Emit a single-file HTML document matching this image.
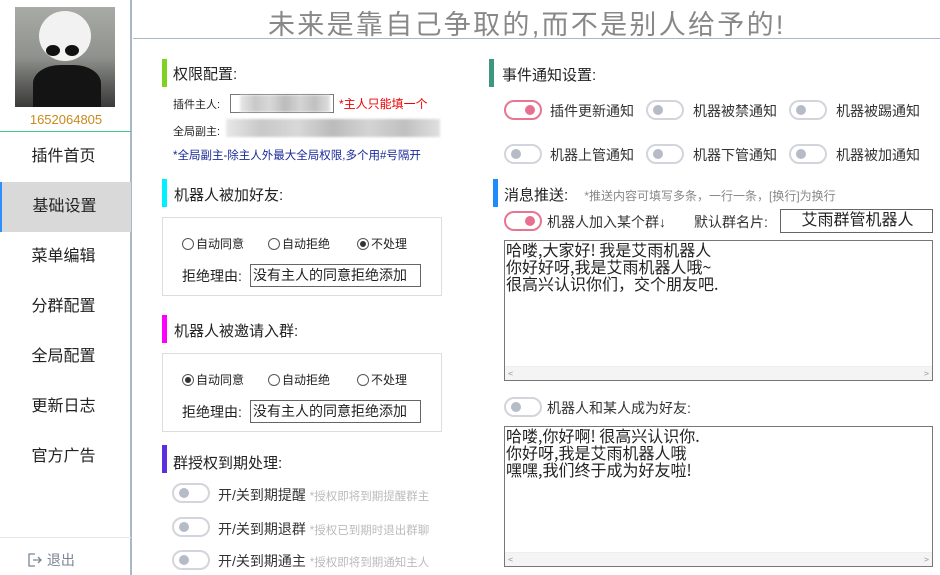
<!DOCTYPE html>
<html><head><meta charset="utf-8"><style>
*{margin:0;padding:0;box-sizing:border-box}
body{width:940px;height:575px;overflow:hidden;background:#fff;position:relative;font-family:"Liberation Sans","Noto Sans CJK SC",sans-serif;color:#222}
.a{position:absolute;white-space:nowrap}
.side{position:absolute;left:0;top:0;width:132px;height:575px;border-right:2px solid #a8b8c6}
.mi{position:absolute;left:0;width:131px;height:50px;line-height:50px;text-align:center;font-size:16px;color:#222;padding-right:4px}
.bar{position:absolute;width:5px;height:28px}
.h{font-size:15px;color:#222}
.tg{position:absolute;width:38px;height:20px;border:2px solid #d4d4dc;border-radius:10px}
.tg::after{content:"";position:absolute;left:5px;top:3px;width:10px;height:10px;border-radius:50%;background:#b6bbc8}
.tg.on{border-color:#e87591}
.tg.on::after{left:auto;right:5px;background:#e8708f}
.tl{font-size:14px;color:#333}
.box{position:absolute;border:1px solid #ddd}
.rd{display:inline-block;width:12px;height:12px;border:1px solid #555;border-radius:50%;vertical-align:-2px;margin-right:2px;position:relative}
.rd.on::after{content:"";position:absolute;left:2px;top:2px;width:6px;height:6px;border-radius:50%;background:#333}
.inp{position:absolute;border:1px solid #666;height:23px;font-size:14px;line-height:21px;padding-left:2px}
.ta{position:absolute;border:1px solid #777;font-size:16px;line-height:17px;padding:0 1px;font-family:"WenQuanYi Zen Hei","Noto Sans CJK SC",sans-serif}
.sb{position:absolute;left:0;right:0;bottom:0;height:14px;border-top:1px solid #eee;background:#f4f4f4;font-size:9px;line-height:13px;color:#999}
.blur{position:absolute;background:linear-gradient(90deg,#e8e8e8,#c8c8c8,#d8d8d8,#bbb,#d4d4d4,#c0c0c0,#e0e0e0);filter:blur(1px)}
</style></head><body>
<div class="side">
 <div class="a" style="left:15px;top:7px;width:100px;height:100px;overflow:hidden;background:linear-gradient(180deg,#a8aba6 0%,#8f928c 50%,#6a6c68 70%,#3a3a3a 100%)">
  <div class="a" style="left:24px;top:4px;width:52px;height:50px;border-radius:50%;background:#f2f2f2"></div>
  <div class="a" style="left:31px;top:38px;width:14px;height:11px;border-radius:50%;background:#111"></div>
  <div class="a" style="left:50px;top:38px;width:14px;height:11px;border-radius:50%;background:#111"></div>
  <div class="a" style="left:18px;top:58px;width:68px;height:46px;border-radius:40% 40% 0 0;background:#141414"></div>
 </div>
 <div class="a" style="left:0;width:132px;top:112px;text-align:center;font-size:13px;color:#c98a1a">1652064805</div>
 <div class="a" style="left:0;top:131px;width:131px;height:1px;background:#3cc88e"></div>
 <div class="mi" style="top:132px">插件首页</div>
 <div class="mi" style="top:182px;background:#d9d9d9;border-left:2px solid #2e8fff">基础设置</div>
 <div class="mi" style="top:232px">菜单编辑</div>
 <div class="mi" style="top:282px">分群配置</div>
 <div class="mi" style="top:332px">全局配置</div>
 <div class="mi" style="top:382px">更新日志</div>
 <div class="mi" style="top:432px">官方广告</div>
 <div class="a" style="left:0;top:537px;width:131px;height:1px;background:#e8e8e8"></div>
 <div class="a" style="left:27px;top:550px;font-size:14px;color:#7a8696"><svg width="16" height="16" viewBox="0 0 16 16" style="vertical-align:-3px" fill="none" stroke="#7a8696" stroke-width="1.3"><path d="M8 2H2v12h6M6 8h8M11 5l3 3-3 3"/></svg> 退出</div>
</div>
<div class="a" style="left:268px;top:3px;font-size:27px;color:#888;letter-spacing:2.3px">未来是靠自己争取的,而不是别人给予的!</div>
<div class="a" style="left:133px;top:38px;width:807px;height:1px;background:#a8b8c6"></div>

<div class="bar" style="left:162px;top:59px;background:#7ed321"></div>
<div class="a h" style="left:173px;top:63px">权限配置:</div>
<div class="a" style="left:173px;top:96px;font-size:11px">插件主人:</div>
<div class="a" style="left:230px;top:94px;width:104px;height:19px;border:1px solid #777"></div>
<div class="blur" style="left:240px;top:95px;width:90px;height:17px"></div>
<div class="a" style="left:339px;top:95px;font-size:12px;color:#e00">*主人只能填一个</div>
<div class="a" style="left:173px;top:123px;font-size:11px">全局副主:</div>
<div class="blur" style="left:226px;top:119px;width:214px;height:18px"></div>
<div class="a" style="left:173px;top:147px;font-size:11.5px;color:#1a2a9a">*全局副主-除主人外最大全局权限,多个用#号隔开</div>

<div class="bar" style="left:162px;top:179px;background:#00f0ff"></div>
<div class="a h" style="left:174px;top:184px">机器人被加好友:</div>
<div class="box" style="left:162px;top:217px;width:280px;height:79px"></div>
<div class="a" style="left:182px;top:235px;font-size:12px"><span class="rd"></span>自动同意</div>
<div class="a" style="left:268px;top:235px;font-size:12px"><span class="rd"></span>自动拒绝</div>
<div class="a" style="left:357px;top:235px;font-size:12px"><span class="rd on"></span>不处理</div>
<div class="a" style="left:182px;top:266px;font-size:14px">拒绝理由:</div>
<div class="inp" style="left:250px;top:264px;width:171px">没有主人的同意拒绝添加</div>

<div class="bar" style="left:162px;top:315px;background:#f0f"></div>
<div class="a h" style="left:174px;top:320px">机器人被邀请入群:</div>
<div class="box" style="left:162px;top:353px;width:280px;height:79px"></div>
<div class="a" style="left:182px;top:371px;font-size:12px"><span class="rd on"></span>自动同意</div>
<div class="a" style="left:268px;top:371px;font-size:12px"><span class="rd"></span>自动拒绝</div>
<div class="a" style="left:357px;top:371px;font-size:12px"><span class="rd"></span>不处理</div>
<div class="a" style="left:182px;top:402px;font-size:14px">拒绝理由:</div>
<div class="inp" style="left:250px;top:400px;width:171px">没有主人的同意拒绝添加</div>

<div class="bar" style="left:162px;top:445px;background:#5b2ee0"></div>
<div class="a h" style="left:173px;top:452px">群授权到期处理:</div>
<div class="tg" style="left:172px;top:483px"></div>
<div class="a tl" style="left:218px;top:485px">开/关到期提醒 <span style="font-size:11.5px;color:#bbb">*授权即将到期提醒群主</span></div>
<div class="tg" style="left:172px;top:517px"></div>
<div class="a tl" style="left:218px;top:519px">开/关到期退群 <span style="font-size:11.5px;color:#bbb">*授权已到期时退出群聊</span></div>
<div class="tg" style="left:172px;top:550px"></div>
<div class="a tl" style="left:218px;top:551px">开/关到期通主 <span style="font-size:11.5px;color:#bbb">*授权即将到期通知主人</span></div>

<div class="bar" style="left:489px;top:59px;background:#3f9680"></div>
<div class="a h" style="left:502px;top:64px">事件通知设置:</div>
<div class="tg on" style="left:504px;top:100px"></div><div class="a tl" style="left:550px;top:101px">插件更新通知</div>
<div class="tg" style="left:646px;top:100px"></div><div class="a tl" style="left:693px;top:101px">机器被禁通知</div>
<div class="tg" style="left:789px;top:100px"></div><div class="a tl" style="left:836px;top:101px">机器被踢通知</div>
<div class="tg" style="left:504px;top:144px"></div><div class="a tl" style="left:550px;top:145px">机器上管通知</div>
<div class="tg" style="left:646px;top:144px"></div><div class="a tl" style="left:693px;top:145px">机器下管通知</div>
<div class="tg" style="left:789px;top:144px"></div><div class="a tl" style="left:836px;top:145px">机器被加通知</div>

<div class="bar" style="left:493px;top:179px;background:#1e8cff"></div>
<div class="a h" style="left:504px;top:184px">消息推送: <span style="font-size:12px;color:#888;margin-left:12px">*推送内容可填写多条，一行一条，[换行]为换行</span></div>
<div class="tg on" style="left:504px;top:211px"></div>
<div class="a tl" style="left:547px;top:212px">机器人加入某个群↓</div>
<div class="a tl" style="left:694px;top:212px">默认群名片:</div>
<div class="inp" style="left:780px;top:209px;width:153px;height:24px;text-align:center;font-size:16px;line-height:22px">艾雨群管机器人</div>
<div class="ta" style="left:504px;top:240px;width:429px;height:141px">哈喽,大家好! 我是艾雨机器人<br>你好好呀,我是艾雨机器人哦~<br>很高兴认识你们，交个朋友吧.<div class="sb"><span style="position:absolute;left:3px">&lt;</span><span style="position:absolute;right:3px">&gt;</span></div></div>
<div class="tg" style="left:504px;top:397px"></div>
<div class="a tl" style="left:547px;top:398px">机器人和某人成为好友:</div>
<div class="ta" style="left:504px;top:426px;width:429px;height:141px">哈喽,你好啊! 很高兴认识你.<br>你好呀,我是艾雨机器人哦<br>嘿嘿,我们终于成为好友啦!<div class="sb"><span style="position:absolute;left:3px">&lt;</span><span style="position:absolute;right:3px">&gt;</span></div></div>
</body></html>
